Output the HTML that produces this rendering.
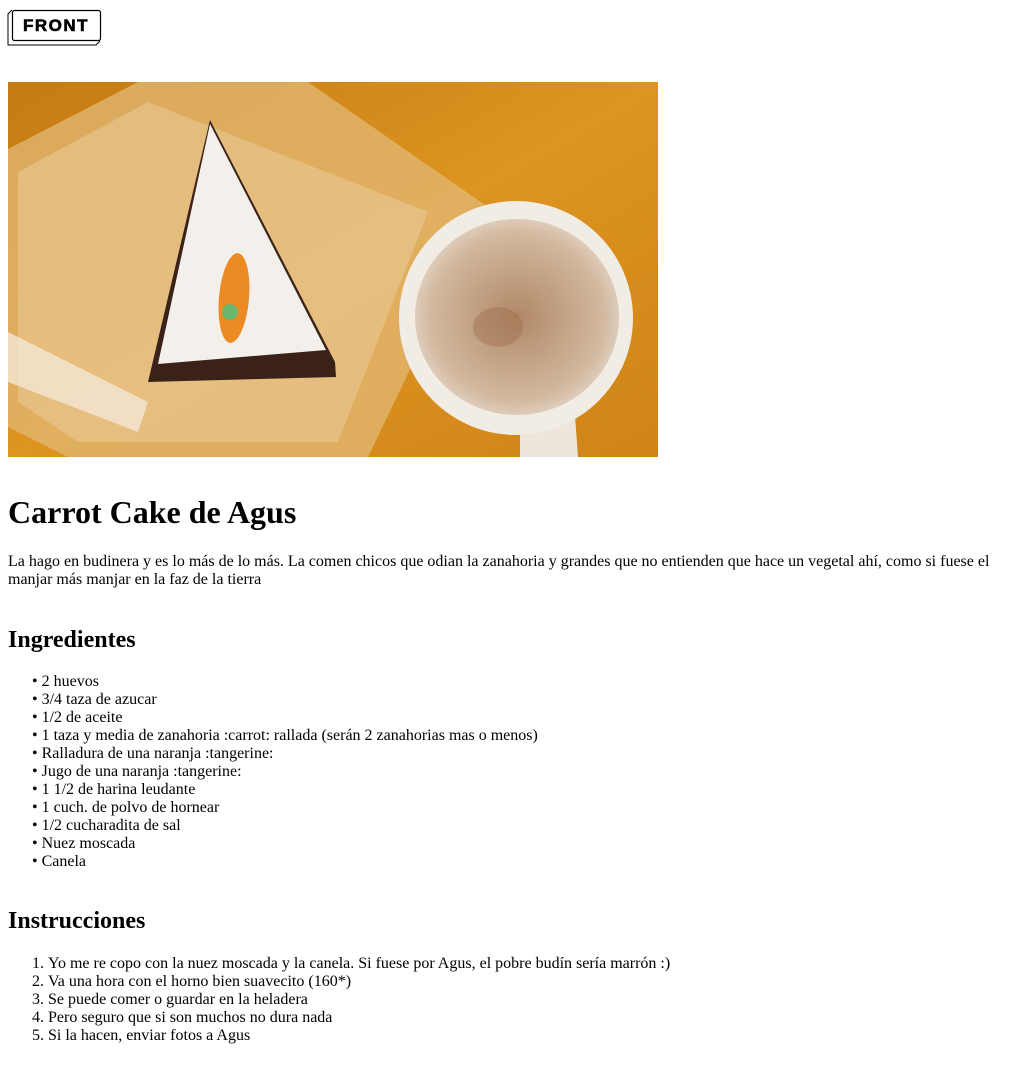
<!DOCTYPE html>
<html><head><meta charset="utf-8"><style>
body{margin:8px;font-family:"Liberation Serif",serif;font-size:16px;color:#000;background:#fff}
.logo{position:relative;height:47px}
.logo svg{position:absolute;left:-8px;top:-8px}
.img{display:block;margin-top:27px;width:650px;height:375px}
h1{font-size:32px;line-height:37px;margin:37px 0 0;font-weight:bold}
p{margin:22px 0 0;line-height:18px}
h2{font-size:24px;line-height:28px;margin:37px 0 0}
h2.b{margin-top:36px}
ul,ol{margin:19px 0 0;padding-left:24px;line-height:18px;list-style-position:inside}
ul{list-style:none}
ul li:before{content:"• "}
ol{margin-top:20px}
</style></head><body>
<div class="logo">
<svg width="110" height="50" viewBox="0 0 110 50">
<path d="M12 10 L8 14 L8 45 L96 45 L100 41" fill="none" stroke="#000" stroke-width="1"/>
<rect x="12.5" y="10.5" width="88" height="30" rx="2" fill="#fff" stroke="#000" stroke-width="1.2"/>
<text x="56" y="31" text-anchor="middle" font-family="Liberation Sans, sans-serif" font-weight="bold" font-size="17" letter-spacing="1.5" stroke="#000" stroke-width="0.6">FRONT</text>
</svg>
</div>
<svg class="img" viewBox="0 0 650 375">
<defs>
<linearGradient id="bg" x1="0" y1="0" x2="1" y2="1"><stop offset="0" stop-color="#c67a14"/><stop offset="0.5" stop-color="#dd9420"/><stop offset="1" stop-color="#d08418"/></linearGradient>
<radialGradient id="foam" cx="0.5" cy="0.5" r="0.6"><stop offset="0" stop-color="#b08866"/><stop offset="0.7" stop-color="#d2b89e"/><stop offset="1" stop-color="#ece4dc"/></radialGradient>
</defs>
<rect width="650" height="375" fill="url(#bg)"/>
<polygon points="0,67 130,0 300,0 480,125 360,375 60,375 0,345" fill="#e2b874" opacity="0.75"/>
<polygon points="10,90 140,20 420,130 330,360 70,360 10,320" fill="#eed7b2" opacity="0.4"/>
<polygon points="0,250 140,320 130,350 0,300" fill="#f4e6d4" opacity="0.8"/>
<polygon points="202,38 140,300 328,295 327,280" fill="#3a2218"/>
<polygon points="202,42 150,282 318,268" fill="#f3f0ec"/>
<ellipse cx="226" cy="216" rx="15" ry="45" fill="#ec8a24" transform="rotate(5 226 216)"/>
<circle cx="222" cy="230" r="8" fill="#6ab870"/>
<path d="M512 320 L512 375 L570 375 L566 320 Z" fill="#ece6dc"/>
<circle cx="508" cy="236" r="117" fill="#f1ece4"/>
<ellipse cx="509" cy="235" rx="102" ry="98" fill="url(#foam)"/>
<ellipse cx="490" cy="245" rx="25" ry="20" fill="#9a6c4c" opacity="0.4"/>
</svg>
<h1>Carrot Cake de Agus</h1>
<p>La hago en budinera y es lo más de lo más. La comen chicos que odian la zanahoria y grandes que no entienden que hace un vegetal ahí, como si fuese el manjar más manjar en la faz de la tierra</p>
<h2>Ingredientes</h2>
<ul>
<li>2 huevos</li>
<li>3/4 taza de azucar</li>
<li>1/2 de aceite</li>
<li>1 taza y media de zanahoria :carrot: rallada (serán 2 zanahorias mas o menos)</li>
<li>Ralladura de una naranja :tangerine:</li>
<li>Jugo de una naranja :tangerine:</li>
<li>1 1/2 de harina leudante</li>
<li>1 cuch. de polvo de hornear</li>
<li>1/2 cucharadita de sal</li>
<li>Nuez moscada</li>
<li>Canela</li>
</ul>
<h2 class="b">Instrucciones</h2>
<ol>
<li>Yo me re copo con la nuez moscada y la canela. Si fuese por Agus, el pobre budín sería marrón :)</li>
<li>Va una hora con el horno bien suavecito (160*)</li>
<li>Se puede comer o guardar en la heladera</li>
<li>Pero seguro que si son muchos no dura nada</li>
<li>Si la hacen, enviar fotos a Agus</li>
</ol>
</body></html>
